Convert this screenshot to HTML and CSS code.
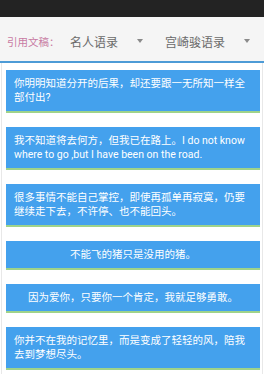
FILE: index.html
```html
<!DOCTYPE html>
<html lang="zh">
<head>
<meta charset="utf-8">
<link rel="stylesheet" href="styles.css">
</head>
<body>
<div class="status"></div>
<div class="toolbar">
  <span class="label">引用文稿：</span>
  <div class="spinner s1"><span class="sp-text">名人语录</span><span class="tri"></span></div>
  <div class="spinner s2"><span class="sp-text">宫崎骏语录</span><span class="tri"></span></div>
</div>
<div class="divider"></div>
<div class="list">
  <div class="card"><p class="txt">你明明知道分开的后果，却还要跟一无所知一样全部付出?</p></div>
  <div class="card"><p class="txt">我不知道将去何方，但我已在路上。I do not know where to go ,but I have been on the road.</p></div>
  <div class="card"><p class="txt">很多事情不能自己掌控，即使再孤单再寂寞，仍要继续走下去，不许停、也不能回头。</p></div>
  <div class="card"><p class="txt">不能飞的猪只是没用的猪。</p></div>
  <div class="card"><p class="txt">因为爱你，只要你一个肯定，我就足够勇敢。</p></div>
  <div class="card"><p class="txt">你并不在我的记忆里，而是变成了轻轻的风，陪我去到梦想尽头。</p></div>
</div>
</body>
</html>
```
FILE: styles.css
```css
html, body {
  margin: 0;
  padding: 0;
  background: #ffffff;
  font-family: Roboto, "Noto Sans CJK SC", sans-serif;
}
.status {
  height: 17px;
  background: #232323;
}
.toolbar {
  height: 44px;
  box-sizing: border-box;
  padding-top: 4px;
  background: #f5f5f5;
  display: flex;
  align-items: center;
}
.label {
  width: 56px;
  padding-left: 7px;
  font-size: 10.5px;
  color: #c87aa3;
  white-space: nowrap;
}
.spinner {
  display: flex;
  align-items: center;
  font-size: 12px;
  color: #6a6a6a;
  white-space: nowrap;
}
.s1 {
  padding-left: 7px;
}
.s2 {
  padding-left: 22px;
}
.tri {
  margin-left: 19px;
  width: 0;
  height: 0;
  border-left: 3.5px solid transparent;
  border-right: 3.5px solid transparent;
  border-top: 4px solid #8a8a8a;
}
.divider {
  height: 2px;
  background: #4d9bd6;
}
.list {
  margin: 0 1px;
  border-left: 1px solid #e8e8e8;
  border-right: 1px solid #e8e8e8;
  padding-top: 7px;
  padding-bottom: 4px;
}
.card {
  margin: 0 2px 14px 4px;
  padding: 7px 8px 6px;
  background: #44a1ed;
  border-bottom: 2px solid #9fd38a;
  display: flex;
  justify-content: center;
}
.card:last-child {
  margin-bottom: 0;
}
.txt {
  margin: 0;
  font-size: 10.5px;
  line-height: 14px;
  color: #ffffff;
  text-align: left;
}
```
